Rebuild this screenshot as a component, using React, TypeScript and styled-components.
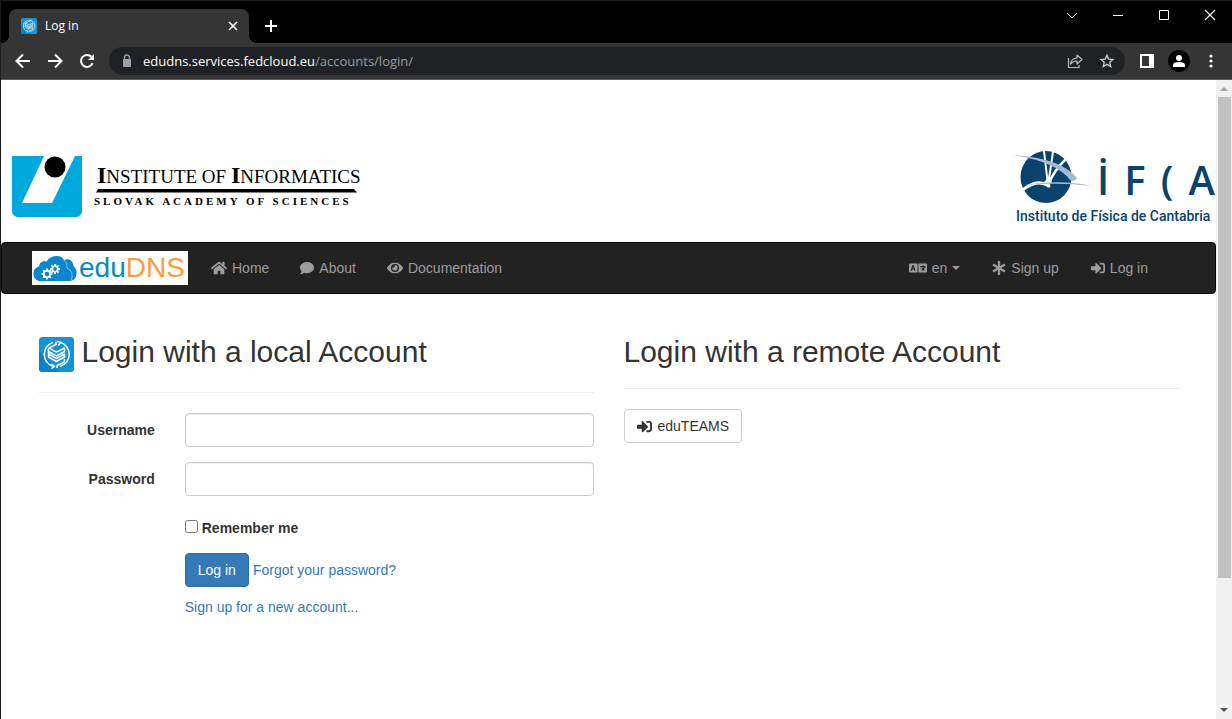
import React from "react";
import styled, { createGlobalStyle } from "styled-components";
import { FaAsterisk, FaComment, FaEye, FaHome, FaLanguage, FaSignInAlt } from "react-icons/fa";

const GlobalStyle = createGlobalStyle`
  *, *::before, *::after { box-sizing: border-box; }
  body {
    margin: 0;
    background: #fff;
    color: #333;
    font: 14px/20px "Liberation Sans", Arial, sans-serif;
  }
  button, input { font: inherit; color: inherit; }
  a { color: #337ab7; text-decoration: none; }
  svg { display: block; flex: none; }
`;

/* ---------- browser window ---------- */

const Window = styled.div`
  display: flex;
  flex-direction: column;
  height: 100vh;
  border: solid #1c1c1c;
  border-width: 1px 0 0 1px;
`;

const TitleBar = styled.header`
  display: flex;
  flex: none;
  height: 42px;
  padding-left: 8px;
  background: #000;
  color: #fff;
`;

const Tab = styled.div`
  position: relative;
  display: flex;
  align-items: center;
  gap: 8px;
  width: 240px;
  margin-top: 8px;
  padding: 0 8px 0 12px;
  border-radius: 8px 8px 0 0;
  background: #353535;
  font: 12px/16px "Open Sans", sans-serif;

  &::before, &::after {
    content: "";
    position: absolute;
    bottom: 0;
    width: 8px;
    height: 8px;
  }
  &::before { left: -8px; background: radial-gradient(circle at 0 0, #000 8px, #353535 8px); }
  &::after { right: -8px; background: radial-gradient(circle at 100% 0, #000 8px, #353535 8px); }
`;

const TabTitle = styled.span`
  flex: 1;
`;

const ChromeButton = styled.button<{ $w?: number; $h?: number }>`
  display: flex;
  align-items: center;
  justify-content: center;
  flex: none;
  width: ${p => p.$w ?? 32}px;
  height: ${p => p.$h ?? 32}px;
  padding: 0;
  border: 0;
  background: none;
  color: #fff;
`;

const NewTab = styled.div`
  display: flex;
  align-items: center;
  margin: 8px auto 0 6px;
`;

const Toolbar = styled.div`
  display: flex;
  align-items: center;
  flex: none;
  height: 37px;
  padding: 0 5px 0 6px;
  border-bottom: 1px solid #5c5c5c;
  background: #353535;
`;

const Omnibox = styled.div`
  display: flex;
  align-items: center;
  flex: 1;
  min-width: 0;
  height: 28px;
  margin: 0 6px;
  padding: 0 2px 0 10px;
  border-radius: 14px;
  background: #202124;
`;

const Url = styled.div`
  flex: 1;
  margin-left: 8px;
  color: #9a9da1;
  font: 13px/20px "Open Sans", sans-serif;
  white-space: nowrap;
`;

const Host = styled.span`
  color: #fff;
`;

const Avatar = styled.span`
  display: flex;
  align-items: center;
  justify-content: center;
  width: 22px;
  height: 22px;
  border-radius: 50%;
  background: #000;
`;

const Viewport = styled.div`
  display: flex;
  flex: 1;
  min-height: 0;
`;

const Page = styled.div`
  flex: 1;
  min-width: 0;
  overflow: hidden;
`;

const ScrollBar = styled.div`
  display: flex;
  flex-direction: column;
  width: 16px;
  background: #f1f1f1;
`;

const ScrollTrack = styled.div`
  flex: 1;
  padding: 0 1px 0 2px;
`;

const ScrollThumb = styled.div`
  height: 79.5%;
  background: #c1c1c1;
`;

/* ---------- site header ---------- */

const Banner = styled.div`
  display: flex;
  align-items: center;
  justify-content: space-between;
  padding: 70px 0 16px 11px;
`;

const Brand = styled.div`
  display: flex;
  align-items: center;
  gap: 12px;
  padding-bottom: 4px;
  color: #000;
`;

const Wordmark = styled.div`
  display: flex;
  flex-direction: column;
  font-family: "Liberation Serif", "Times New Roman", serif;
`;

const InstituteName = styled.div`
  padding-left: 3px;
  font-size: 19px;
  line-height: 24px;
  white-space: nowrap;
`;

const Initial = styled.span`
  font-size: 24px;
  font-weight: bold;
`;

const AcademyName = styled.div`
  font-size: 11px;
  font-weight: bold;
  line-height: 16px;
  letter-spacing: 3px;
  white-space: nowrap;
`;

const Ifca = styled.div`
  display: flex;
  flex-direction: column;
  min-width: 203px;
  color: #0a426e;
`;

const IfcaMark = styled.div`
  display: flex;
  align-items: flex-start;
  height: 56px;
`;

const IfcaLetters = styled.div`
  display: flex;
  flex: 1;
  justify-content: space-between;
  padding: 0 1px 0 6px;
  font: 600 40px/60px "Open Sans", sans-serif;
`;

const IfcaName = styled.div`
  padding-left: 3px;
  font: 500 14px/20px Roboto, sans-serif;
  white-space: nowrap;
`;

const NavBar = styled.nav`
  display: flex;
  align-items: center;
  height: 52px;
  padding: 0 52px 0 30px;
  border: 1px solid #080808;
  border-radius: 4px;
  background: #222;
`;

const NavLogo = styled.a`
  display: flex;
  align-items: center;
  gap: 1px;
  width: 156px;
  height: 34px;
  margin-right: 8px;
  background: #fff;
  color: #0a88c4;
  font-size: 28px;
  line-height: 34px;
`;

const NavLogoAccent = styled.span`
  color: #ff9a3c;
`;

const NavGroup = styled.div<{ $end?: boolean }>`
  display: flex;
  gap: ${p => (p.$end ? "2px" : "1px")};
  margin-left: ${p => (p.$end ? "auto" : "0")};
`;

const NavLink = styled.a`
  display: flex;
  align-items: center;
  gap: 5px;
  padding: 15px;
  color: #9d9d9d;
`;

const Caret = styled.span`
  border: solid transparent;
  border-width: 4px 4px 0;
  border-top-color: #9d9d9d;
`;

/* ---------- login forms ---------- */

const Main = styled.main`
  display: grid;
  grid-template-columns: 1fr 1fr;
  gap: 30px;
  max-width: 1170px;
  margin: 0 auto;
  padding: 41px 15px 0;
`;

const Heading = styled.h2`
  display: flex;
  align-items: flex-start;
  gap: 8px;
  margin: 0;
  font-size: 30px;
  font-weight: normal;
  line-height: 33px;
  white-space: nowrap;
`;

const HeadingIcon = styled.span`
  padding-top: 2px;
`;

const Rule = styled.hr`
  margin: 20px 0;
  border: 0;
  border-top: 1px solid #eee;
`;

const Form = styled.form`
  display: grid;
  grid-template-columns: repeat(4, minmax(0, 1fr));
  gap: 15px 30px;
`;

const FieldLabel = styled.label`
  padding-top: 7px;
  font-weight: bold;
  text-align: right;
`;

const Field = styled.input`
  grid-column: span 3;
  height: 34px;
  padding: 6px 12px;
  border: 1px solid #ccc;
  border-radius: 4px;
  background: #fff;
  box-shadow: inset 0 1px 1px rgba(0, 0, 0, 0.075);
`;

const Actions = styled.div`
  display: flex;
  flex-direction: column;
  grid-column: 2 / span 3;
  gap: 10px;
`;

const ActionRow = styled.div`
  display: flex;
  align-items: center;
  gap: 4px;
`;

const CheckLabel = styled.label`
  display: flex;
  align-items: center;
  grid-column: 2 / span 3;
  gap: 4px;
  padding-top: 7px;
  font-weight: bold;
`;

const CheckBox = styled.input`
  width: 13px;
  height: 13px;
  margin: 0 0 3px;
`;

const Button = styled.button<{ $primary?: boolean }>`
  display: inline-flex;
  align-items: center;
  gap: 6px;
  height: 34px;
  padding: 0 12px;
  border: 1px solid ${p => (p.$primary ? "#2e6da4" : "#ccc")};
  border-radius: 4px;
  background: ${p => (p.$primary ? "#337ab7" : "#fff")};
  color: ${p => (p.$primary ? "#fff" : "#333")};
`;

/* ---------- drawings ---------- */

const DnsIcon = ({ size }: { size: number }) => (
  <svg width={size} height={size} viewBox="0 0 35 35">
    <rect width="35" height="35" rx="3.5" fill="#1593d6" />
    <path d="M0 14 L21 35 H3.500 A3.500 3.500 0 0 1 0 31.500Z" fill="#0783c6" />
    <g fill="none" stroke="#fff" strokeWidth="1.500" strokeLinejoin="round" strokeLinecap="round">
      <path d="M13.500 5.600A12.500 12.500 0 0 0 14 29.300M21 5.300A12.500 12.500 0 0 1 21.500 29.300" />
      <path d="M18.500 4.500L22 5.500L19.500 8M13 27.500L15.500 29.500L13 31.200" />
      <path d="M17 5.500V7.500L10 11L17.500 15.200L25.500 11V14.500L17.500 19L9.500 14.500V12" />
      <path d="M9.500 17V20L17.500 24.500L25.500 20V17L17.500 21.500Z" />
      <path d="M9.500 14.500V17M25.500 22.500Q26 25 23.500 26L18 28.500V30.500" />
    </g>
  </svg>
);

const InstituteLogo = () => (
  <svg width="70" height="61" viewBox="0 0 70 61">
    <path d="M0 0H32L10 47H40L63 0H70V56Q69 60 65 61H5Q1 60 0 56Z" fill="#00a9dc" />
    <circle cx="43" cy="11" r="10.500" fill="#000" />
  </svg>
);

const TaperedLine = () => (
  <svg width="263" height="4" viewBox="0 0 263 4">
    <path d="M4 0H260L263 3.500H2Z" fill="#000" />
  </svg>
);

const IfcaGlobe = () => (
  <svg width="78" height="56" viewBox="0 0 78 56">
    <ellipse cx="33" cy="27" rx="25.500" ry="26" fill="#0a426e" />
    <g stroke="#fff" fill="none" strokeLinecap="round">
      <path d="M35 35L31 1M35 35L40 2" strokeWidth="2" />
      <path d="M35 35Q41 20 54 8" strokeWidth="2.500" />
      <path d="M36 36Q28 31 20 34Q12 37 8 42" strokeWidth="3" />
    </g>
    <path d="M31 32L35 38L39 31L35 28Z" fill="#fff" />
    <path d="M0 5Q48 8 64 28Q62 32 57 30Q44 12 0 5Z" fill="#a5b8d6" />
    <path d="M11 35Q50 29 78 36Q48 32 11 35Z" fill="#a5b8d6" />
  </svg>
);

const GEAR_ANGLES = [0, 45, 90, 135, 180, 225, 270, 315];

const Gear = ({ x, y, r }: { x: number; y: number; r: number }) => (
  <g transform={`translate(${x} ${y})`} stroke="#fff" fill="none">
    <circle r={r} strokeWidth="1.800" />
    {GEAR_ANGLES.map(a => (
      <path key={a} d={`M0 ${-r}V${-r - 2.2}`} strokeWidth="1.800" transform={`rotate(${a})`} />
    ))}
  </g>
);

const CloudLogo = () => (
  <svg width="46" height="34" viewBox="0 0 46 34">
    <path d="M7 30A7.500 7.500 0 0 1 7 15.500Q8 9 14.500 10.500Q18 5 25 5Q30 5 32 9Q40 6 41.500 15Q45 18 44.500 23Q44 30 37 30Z" fill="#0a85cf" />
    <path d="M32 9Q36 12 35 17Q42 20 39.500 29" fill="none" stroke="#7fc0ea" strokeWidth="1" />
    <Gear x={15} y={23} r={3.2} />
    <Gear x={23} y={18} r={2.8} />
  </svg>
);

const Stroke = ({ d, size = 16, width = 2, color = "currentColor" }: { d: string; size?: number; width?: number; color?: string }) => (
  <svg width={size} height={size} viewBox={`0 0 ${size} ${size}`} fill="none" stroke={color} strokeWidth={width}>
    <path d={d} />
  </svg>
);

const ReloadIcon = () => (
  <svg width="16" height="16" viewBox="0 0 16 16">
    <path d="M13.600 10.200A6 6 0 1 1 12.400 3.800" fill="none" stroke="#fff" strokeWidth="2" />
    <path d="M15 1V7H9Z" fill="#fff" />
  </svg>
);

const LockIcon = () => (
  <svg width="16" height="16" viewBox="0 0 16 16">
    <rect x="4" y="6" width="8" height="8" rx="1" fill="#9aa0a6" />
    <path d="M5.500 6.500V4.500A2.500 2.500 0 0 1 10.500 4.500V6.500" fill="none" stroke="#9aa0a6" strokeWidth="1.300" />
  </svg>
);

const ShareIcon = () => (
  <svg width="16" height="16" viewBox="0 0 16 16" fill="none" stroke="#b9bbbe" strokeWidth="1.200">
    <path d="M1.500 5V14.500H12V12" />
    <path d="M3.500 11Q4 5.500 10 5V2L15 6.500L10 11V8Q6 8 3.500 11Z" strokeLinejoin="round" />
  </svg>
);

const StarIcon = () => (
  <svg width="16" height="16" viewBox="0 0 16 16" fill="none" stroke="#c4c6c9" strokeWidth="1.400">
    <path d="M8 2.200L9.700 6.100L14 6.500L10.800 9.300L11.700 13.500L8 11.300L4.300 13.500L5.200 9.300L2 6.500L6.300 6.100Z" />
  </svg>
);

const SidePanelIcon = () => (
  <svg width="14" height="14" viewBox="0 0 14 14">
    <path d="M0 0H14V14H0ZM2 2V12H9V2Z" fill="#fff" fillRule="evenodd" />
  </svg>
);

const PersonIcon = () => (
  <svg width="14" height="14" viewBox="0 0 14 14" fill="#fff">
    <circle cx="7" cy="4" r="3" />
    <path d="M1 13V11Q1 8 7 8Q13 8 13 11V13Z" />
  </svg>
);

const DotsIcon = () => (
  <svg width="4" height="14" viewBox="0 0 4 14" fill="#fff">
    <circle cx="2" cy="2" r="1.600" />
    <circle cx="2" cy="7" r="1.600" />
    <circle cx="2" cy="12" r="1.600" />
  </svg>
);

const ScrollArrow = ({ down }: { down?: boolean }) => (
  <svg width="16" height="17" viewBox="0 0 16 17">
    <path d={down ? "M4 6H12L8 10Z" : "M4 11H12L8 7Z"} fill={down ? "#505050" : "#a3a3a3"} />
  </svg>
);

export default function App() {
  return (
    <Window>
      <GlobalStyle />
      <TitleBar>
        <Tab>
          <DnsIcon size={16} />
          <TabTitle>Log in</TabTitle>
          <ChromeButton $w={16} $h={16} aria-label="Close tab">
            <Stroke d="M4 4L12 12M12 4L4 12" width={1.6} />
          </ChromeButton>
        </Tab>
        <NewTab>
          <ChromeButton aria-label="New tab">
            <Stroke d="M8 2V14M2 8H14" />
          </ChromeButton>
        </NewTab>
        <ChromeButton $w={46} $h={28} aria-label="Search tabs">
          <Stroke d="M4 6L9 11L14 6" width={1} />
        </ChromeButton>
        <ChromeButton $w={46} $h={28} aria-label="Minimize">
          <Stroke d="M4 8.500H14" width={1} />
        </ChromeButton>
        <ChromeButton $w={46} $h={28} aria-label="Maximize">
          <Stroke d="M4.500 3.500H13.500V12.500H4.500Z" width={1} />
        </ChromeButton>
        <ChromeButton $w={46} $h={28} aria-label="Close">
          <Stroke d="M4 3L14 13M14 3L4 13" width={1.2} />
        </ChromeButton>
      </TitleBar>
      <Toolbar>
        <ChromeButton aria-label="Back">
          <Stroke d="M15 8H2M8 1.500L1.500 8L8 14.500" />
        </ChromeButton>
        <ChromeButton aria-label="Forward">
          <Stroke d="M1 8H14M8 1.500L14.500 8L8 14.500" />
        </ChromeButton>
        <ChromeButton aria-label="Reload">
          <ReloadIcon />
        </ChromeButton>
        <Omnibox>
          <LockIcon />
          <Url>
            <Host>edudns.services.fedcloud.eu</Host>/accounts/login/
          </Url>
          <ChromeButton $h={28} aria-label="Share">
            <ShareIcon />
          </ChromeButton>
          <ChromeButton $h={28} aria-label="Bookmark">
            <StarIcon />
          </ChromeButton>
        </Omnibox>
        <ChromeButton aria-label="Side panel">
          <SidePanelIcon />
        </ChromeButton>
        <ChromeButton aria-label="Profile">
          <Avatar>
            <PersonIcon />
          </Avatar>
        </ChromeButton>
        <ChromeButton aria-label="Menu">
          <DotsIcon />
        </ChromeButton>
      </Toolbar>
      <Viewport>
        <Page>
          <Banner>
            <Brand>
              <InstituteLogo />
              <Wordmark>
                <InstituteName>
                  <Initial>I</Initial>NSTITUTE OF <Initial>I</Initial>NFORMATICS
                </InstituteName>
                <TaperedLine />
                <AcademyName>SLOVAK ACADEMY OF SCIENCES</AcademyName>
              </Wordmark>
            </Brand>
            <Ifca>
              <IfcaMark>
                <IfcaGlobe />
                <IfcaLetters>
                  <span>İ</span>
                  <span>F</span>
                  <span>(</span>
                  <span>A</span>
                </IfcaLetters>
              </IfcaMark>
              <IfcaName>Instituto de Física de Cantabria</IfcaName>
            </Ifca>
          </Banner>
          <NavBar>
            <NavLogo href="#home">
              <CloudLogo />
              <span>
                edu<NavLogoAccent>DNS</NavLogoAccent>
              </span>
            </NavLogo>
            <NavGroup>
              <NavLink href="#home"><FaHome size={16} />Home</NavLink>
              <NavLink href="#about"><FaComment size={14} />About</NavLink>
              <NavLink href="#docs"><FaEye size={16} />Documentation</NavLink>
            </NavGroup>
            <NavGroup $end>
              <NavLink href="#language"><FaLanguage size={18} />en <Caret /></NavLink>
              <NavLink href="#signup"><FaAsterisk size={14} />Sign up</NavLink>
              <NavLink href="#login"><FaSignInAlt size={14} />Log in</NavLink>
            </NavGroup>
          </NavBar>
          <Main>
            <section>
              <Heading>
                <HeadingIcon><DnsIcon size={35} /></HeadingIcon>
                Login with a local Account
              </Heading>
              <Rule />
              <Form onSubmit={e => e.preventDefault()}>
                <FieldLabel htmlFor="username">Username</FieldLabel>
                <Field id="username" type="text" />
                <FieldLabel htmlFor="password">Password</FieldLabel>
                <Field id="password" type="password" />
                <CheckLabel>
                  <CheckBox type="checkbox" />
                  Remember me
                </CheckLabel>
                <Actions>
                  <ActionRow>
                    <Button $primary type="submit">Log in</Button>
                    <a href="#reset">Forgot your password?</a>
                  </ActionRow>
                  <ActionRow>
                    <a href="#signup">Sign up for a new account...</a>
                  </ActionRow>
                </Actions>
              </Form>
            </section>
            <section>
              <Heading>Login with a remote Account</Heading>
              <Rule />
              <Button type="button"><FaSignInAlt size={15} />eduTEAMS</Button>
            </section>
          </Main>
        </Page>
        <ScrollBar aria-hidden="true">
          <ScrollArrow />
          <ScrollTrack>
            <ScrollThumb />
          </ScrollTrack>
          <ScrollArrow down />
        </ScrollBar>
      </Viewport>
    </Window>
  );
}
